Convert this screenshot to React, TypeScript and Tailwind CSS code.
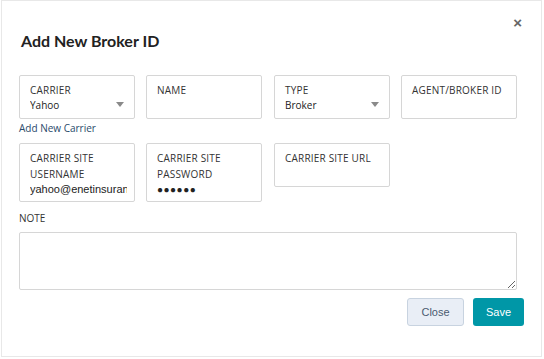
import { ChangeEvent, useState } from "react";

// Modal "Add New Broker ID" — caixas de campo com rótulo em caixa alta.

function Caret() {
  return (
    <svg width="8" height="5" viewBox="0 0 8 5" className="fill-[#8a8a8a]">
      <path d="M0 0h8L4 5z" />
    </svg>
  );
}

function Campo({
  rotulo,
  valor,
  seta,
  alto,
  senha,
}: {
  rotulo: string[];
  valor?: string;
  seta?: boolean;
  alto?: boolean;
  senha?: boolean;
}) {
  return (
    <div
      className={`relative w-[116px] overflow-hidden rounded-[2px] border border-[#d6d6d6] bg-white pl-[10px] pr-[7px] pt-[6px] ${
        alto ? "h-[59px]" : "h-[44px]"
      }`}
    >
      {rotulo.map((l) => (
        <div
          key={l}
          className="text-[10px] leading-[16px] tracking-[0.2px] text-[#333] [font-family:'Open_Sans',sans-serif]"
        >
          {l}
        </div>
      ))}
      {valor && (
        <div
          className={`overflow-hidden whitespace-nowrap leading-[15px] text-[#222] ${
            senha
              ? "text-[10px] tracking-[0.5px] [font-family:'Liberation_Sans',sans-serif]"
              : seta
                ? "text-[10px] [font-family:'Open_Sans',sans-serif]"
                : "text-[11px] [font-family:'Liberation_Sans',sans-serif]"
          }`}
        >
          {valor}
        </div>
      )}
      {seta && (
        <span className="absolute right-[10px] top-[26px]">
          <Caret />
        </span>
      )}
    </div>
  );
}

export default function App() {
  const [nota, setNota] = useState("");
  return (
    <div className="h-[359px] w-[544px] bg-white">
      <div className="ml-[1px] h-[357px] w-[541px] border border-[#e8e8e8] bg-white pl-[17px] pt-[9px]">
        <div className="flex justify-end pr-[19px] pt-[5px]">
          <button className="text-[15px] font-bold leading-none text-[#666] [font-family:'Liberation_Sans',sans-serif]">
            ×
          </button>
        </div>
        <h1 className="ml-[2px] mt-[1px] text-[16px] font-bold leading-[20px] text-[#222] [font-family:Lato,sans-serif]">
          Add New Broker ID
        </h1>

        <div className="mt-[24px] flex gap-[11px]">
          <Campo rotulo={["CARRIER"]} valor="Yahoo" seta />
          <Campo rotulo={["NAME"]} />
          <div className="ml-[1px]">
            <Campo rotulo={["TYPE"]} valor="Broker" seta />
          </div>
          <Campo rotulo={["AGENT/BROKER ID"]} />
        </div>
        <a className="mt-[2px] block text-[10px] leading-[14px] text-[#2a4a6a] [font-family:'Open_Sans',sans-serif]">
          Add New Carrier
        </a>

        <div className="mt-[8px] flex items-start gap-[11px]">
          <Campo
            rotulo={["CARRIER SITE", "USERNAME"]}
            valor="yahoo@enetinsurance.com"
            alto
          />
          <Campo rotulo={["CARRIER SITE", "PASSWORD"]} valor="●●●●●●" senha alto />
          <div className="ml-[1px]">
            <Campo rotulo={["CARRIER SITE URL"]} />
          </div>
        </div>

        <div className="mt-[9px] text-[10px] leading-[14px] text-[#333] [font-family:'Open_Sans',sans-serif]">
          NOTE
        </div>
        <textarea
          value={nota}
          onChange={(e: ChangeEvent<HTMLTextAreaElement>) => setNota(e.target.value)}
          className="mt-[7px] block h-[58px] w-[498px] rounded-[2px] border border-[#d6d6d6] outline-none"
        />

        <div className="mt-[8px] flex justify-end gap-[9px] pr-[17px]">
          <button className="h-[28px] w-[57px] rounded-[3px] border border-[#c8d3e0] bg-[#e9eef6] text-[11px] text-[#4a5a70] [font-family:'Liberation_Sans',sans-serif]">
            Close
          </button>
          <button className="h-[28px] w-[51px] rounded-[3px] bg-[#0097a7] text-[11px] text-white [font-family:'Liberation_Sans',sans-serif]">
            Save
          </button>
        </div>
      </div>
    </div>
  );
}
